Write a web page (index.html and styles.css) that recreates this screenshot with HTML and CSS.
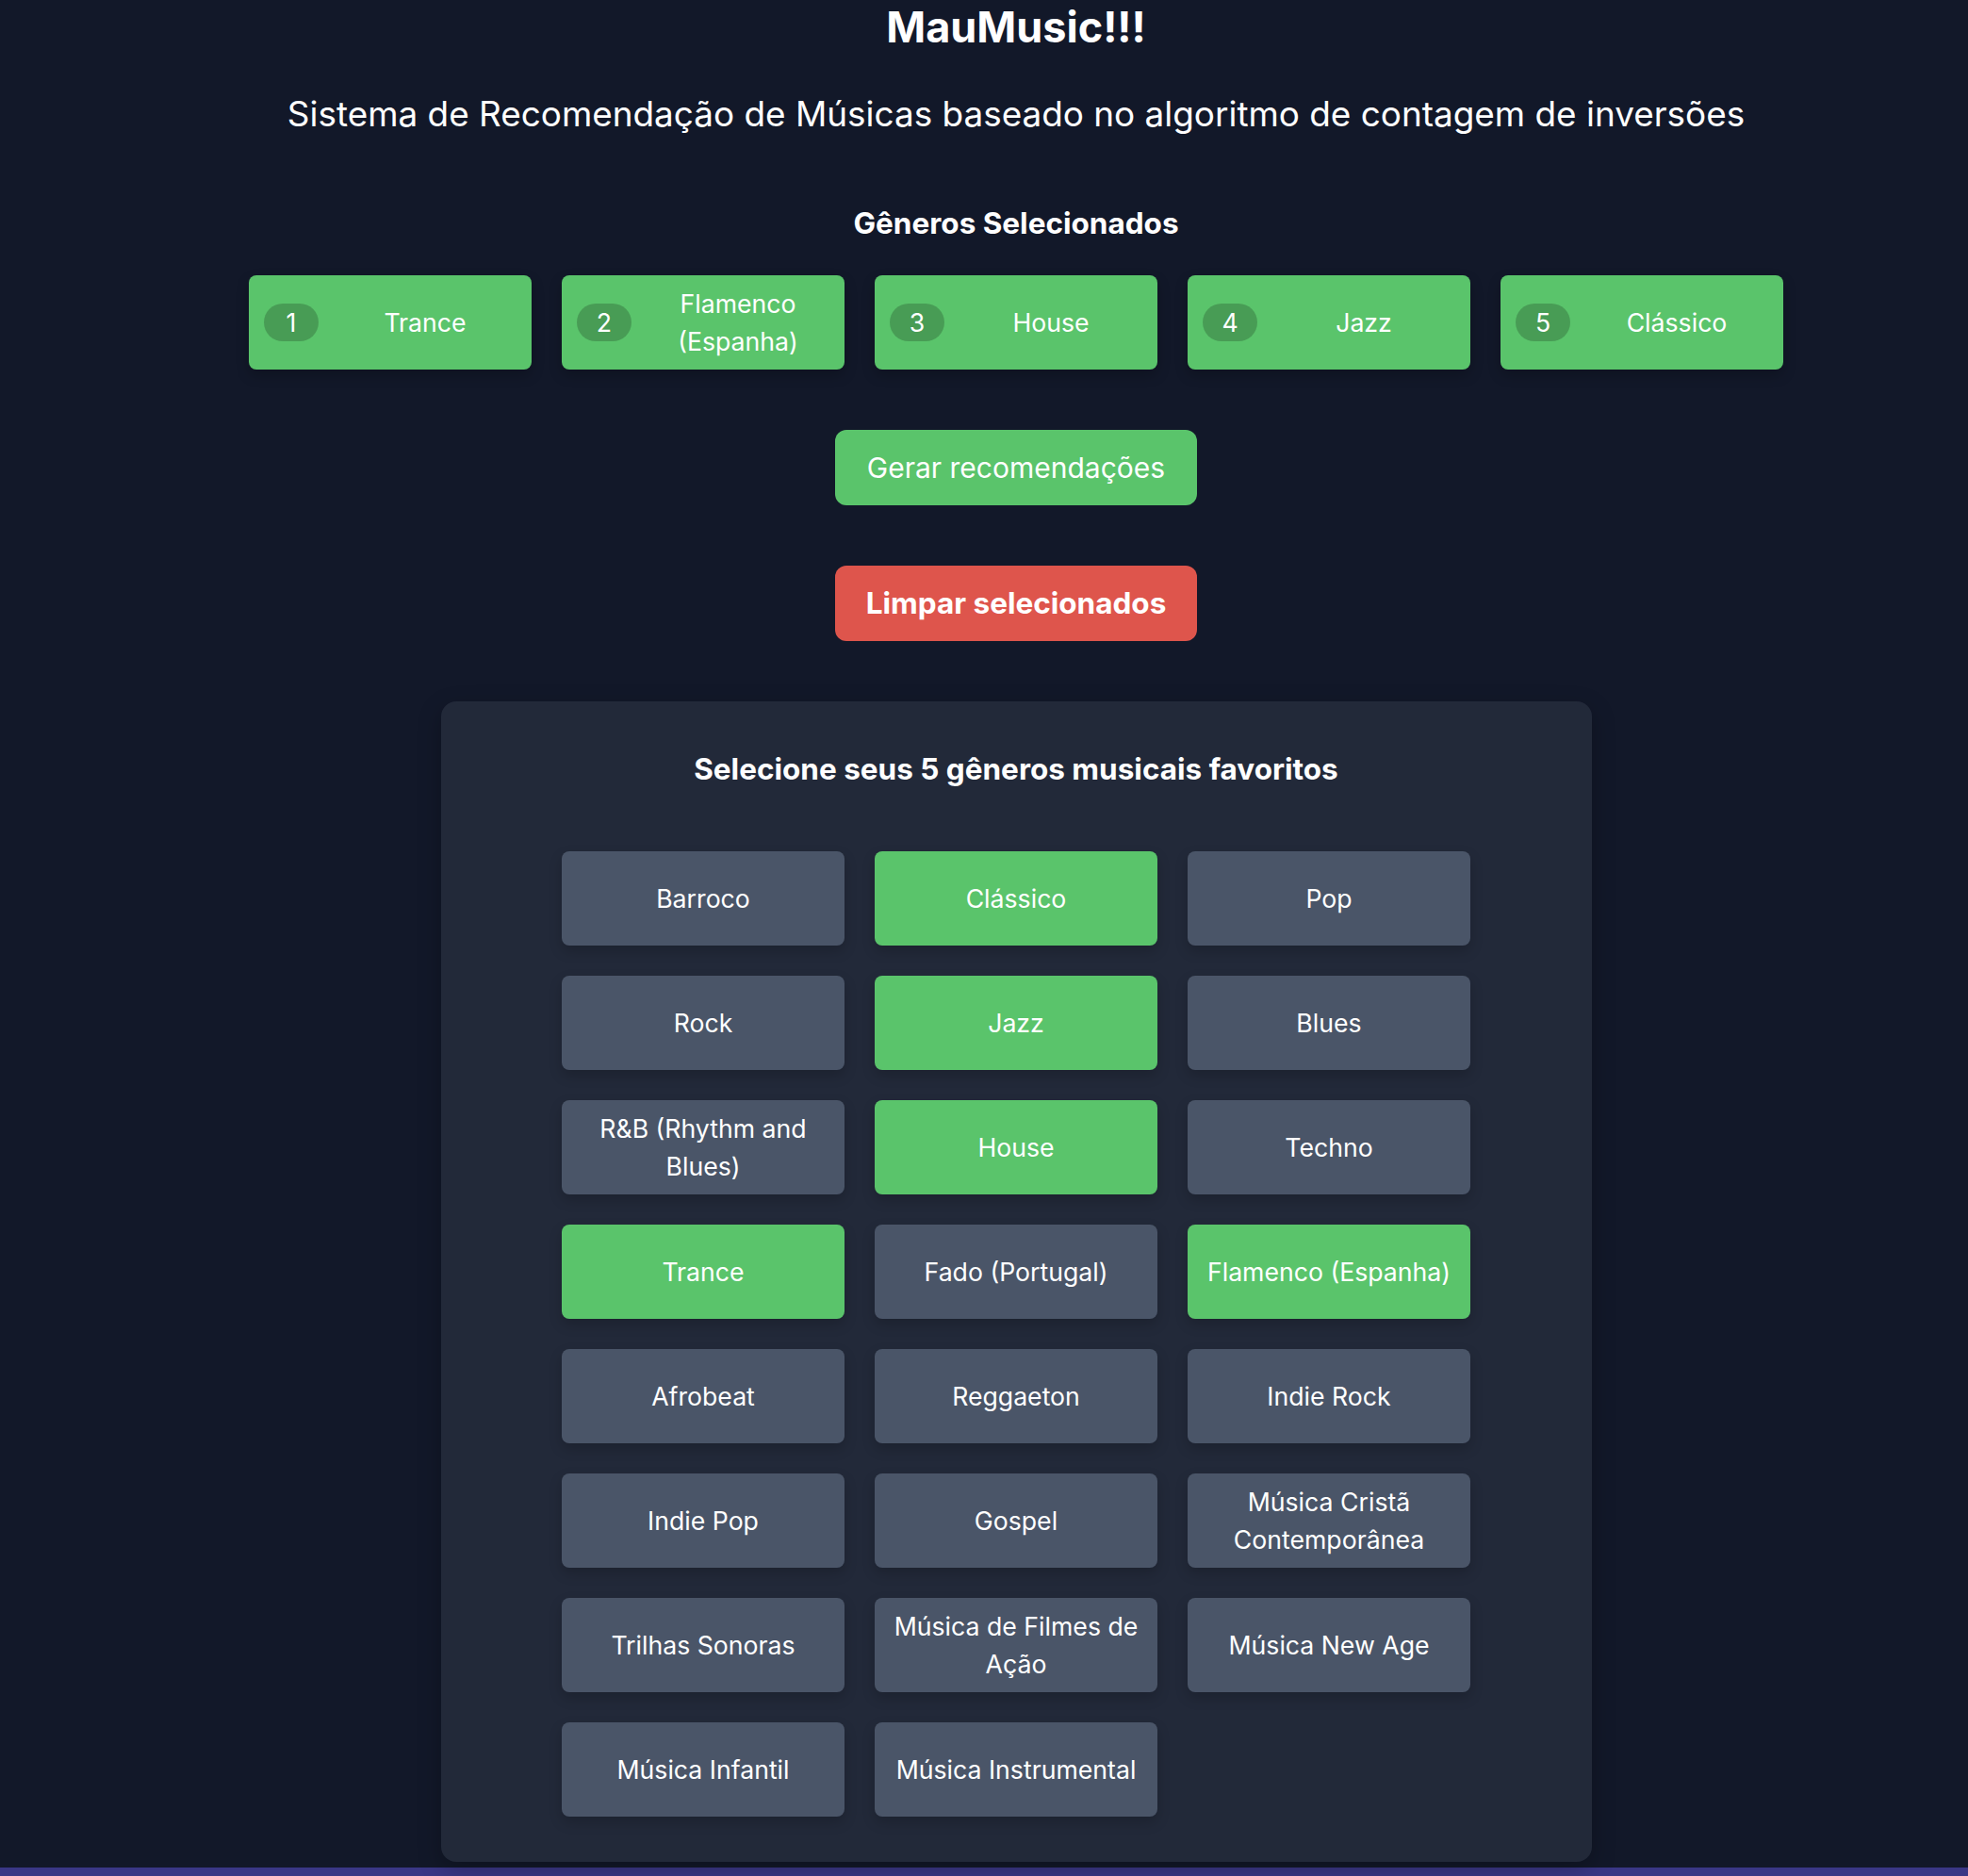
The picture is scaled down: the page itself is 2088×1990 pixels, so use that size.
FILE: index.html
```html
<!DOCTYPE html>
<html lang="pt-BR">
<head>
<meta charset="utf-8">
<title>MauMusic!!!</title>
<link rel="stylesheet" href="styles.css">
</head>
<body>
<div class="page">
  <main class="app">
    <h1 class="title">MauMusic!!!</h1>
    <p class="subtitle">Sistema de Recomendação de Músicas baseado no algoritmo de contagem de inversões</p>

    <h2 class="section-title">Gêneros Selecionados</h2>
    <div class="selected">
      <div class="chip"><span class="badge">1</span><span class="chip-label">Trance</span></div>
      <div class="chip"><span class="badge">2</span><span class="chip-label">Flamenco (Espanha)</span></div>
      <div class="chip"><span class="badge">3</span><span class="chip-label">House</span></div>
      <div class="chip"><span class="badge">4</span><span class="chip-label">Jazz</span></div>
      <div class="chip"><span class="badge">5</span><span class="chip-label">Clássico</span></div>
    </div>

    <button class="btn btn-generate">Gerar recomendações</button>
    <button class="btn btn-clear">Limpar selecionados</button>

    <section class="panel">
      <h2 class="panel-title">Selecione seus 5 gêneros musicais favoritos</h2>
      <div class="grid">
        <button class="genre">Barroco</button>
        <button class="genre is-selected">Clássico</button>
        <button class="genre">Pop</button>
        <button class="genre">Rock</button>
        <button class="genre is-selected">Jazz</button>
        <button class="genre">Blues</button>
        <button class="genre">R&amp;B (Rhythm and Blues)</button>
        <button class="genre is-selected">House</button>
        <button class="genre">Techno</button>
        <button class="genre is-selected">Trance</button>
        <button class="genre">Fado (Portugal)</button>
        <button class="genre is-selected">Flamenco (Espanha)</button>
        <button class="genre">Afrobeat</button>
        <button class="genre">Reggaeton</button>
        <button class="genre">Indie Rock</button>
        <button class="genre">Indie Pop</button>
        <button class="genre">Gospel</button>
        <button class="genre">Música Cristã Contemporânea</button>
        <button class="genre">Trilhas Sonoras</button>
        <button class="genre">Música de Filmes de Ação</button>
        <button class="genre">Música New Age</button>
        <button class="genre">Música Infantil</button>
        <button class="genre">Música Instrumental</button>
      </div>
    </section>
  </main>
</div>
<footer class="footer-band"></footer>
</body>
</html>
```
FILE: styles.css
```css
* { box-sizing: border-box; }

html, body {
  margin: 0;
  padding: 0;
  background: #121829;
}

body {
  font-family: Inter, "Noto Sans", "Liberation Sans", sans-serif;
  color: #ffffff;
}

.page {
  padding-left: 68px;
}

.app {
  display: flex;
  flex-direction: column;
  align-items: center;
}

.title {
  margin: 0;
  font-size: 45px;
  line-height: 58px;
  font-weight: 700;
}

.subtitle {
  margin: 35px 0 0;
  font-size: 36.9px;
  line-height: 56px;
  font-weight: 400;
}

.section-title {
  margin: 68px 0 0;
  font-size: 31.5px;
  line-height: 40px;
  font-weight: 700;
}

.selected {
  margin-top: 35px;
  display: flex;
  gap: 32px;
}

.chip {
  width: 300px;
  height: 100px;
  display: flex;
  align-items: center;
  gap: 16px;
  padding: 0 16px;
  background: #5ac46b;
  border-radius: 8px;
  box-shadow: 0 6px 14px rgba(0, 0, 0, 0.22);
}

.badge {
  flex: none;
  width: 58px;
  height: 40px;
  line-height: 40px;
  border-radius: 20px;
  background: rgba(0, 0, 0, 0.2);
  text-align: center;
  font-size: 26.67px;
}

.chip-label {
  flex: 1;
  text-align: center;
  font-size: 26.67px;
  line-height: 40px;
}

.btn {
  font-family: inherit;
  color: #ffffff;
  border: 0;
  border-radius: 12px;
  padding: 16px 32px;
  font-size: 30px;
  line-height: 48px;
  min-width: 384px;
  cursor: pointer;
}

.btn-generate {
  margin-top: 64px;
  background: #5ac46b;
  font-weight: 400;
}

.btn-clear {
  margin-top: 64px;
  background: #de554c;
  font-weight: 700;
  font-size: 31.5px;
}

.panel {
  margin-top: 64px;
  width: 1221px;
  background: #222939;
  border-radius: 16px;
  padding: 52px 48px 48px;
  box-shadow: 0 8px 24px rgba(0, 0, 0, 0.25);
}

.panel-title {
  margin: 0 0 67px;
  text-align: center;
  font-size: 31.5px;
  line-height: 40px;
  font-weight: 700;
}

.grid {
  display: grid;
  grid-template-columns: repeat(3, 300px);
  grid-auto-rows: 100px;
  gap: 32px;
  justify-content: center;
}

.genre {
  font-family: inherit;
  font-size: 26.67px;
  line-height: 40px;
  color: #ffffff;
  background: #4a5568;
  border: 0;
  border-radius: 8px;
  padding: 0 20px;
  box-shadow: 0 6px 14px rgba(0, 0, 0, 0.18);
  cursor: pointer;
}

.genre.is-selected {
  background: #5ac46b;
}

.footer-band {
  margin-top: 6px;
  height: 40px;
  background: #3a3786;
}
```
